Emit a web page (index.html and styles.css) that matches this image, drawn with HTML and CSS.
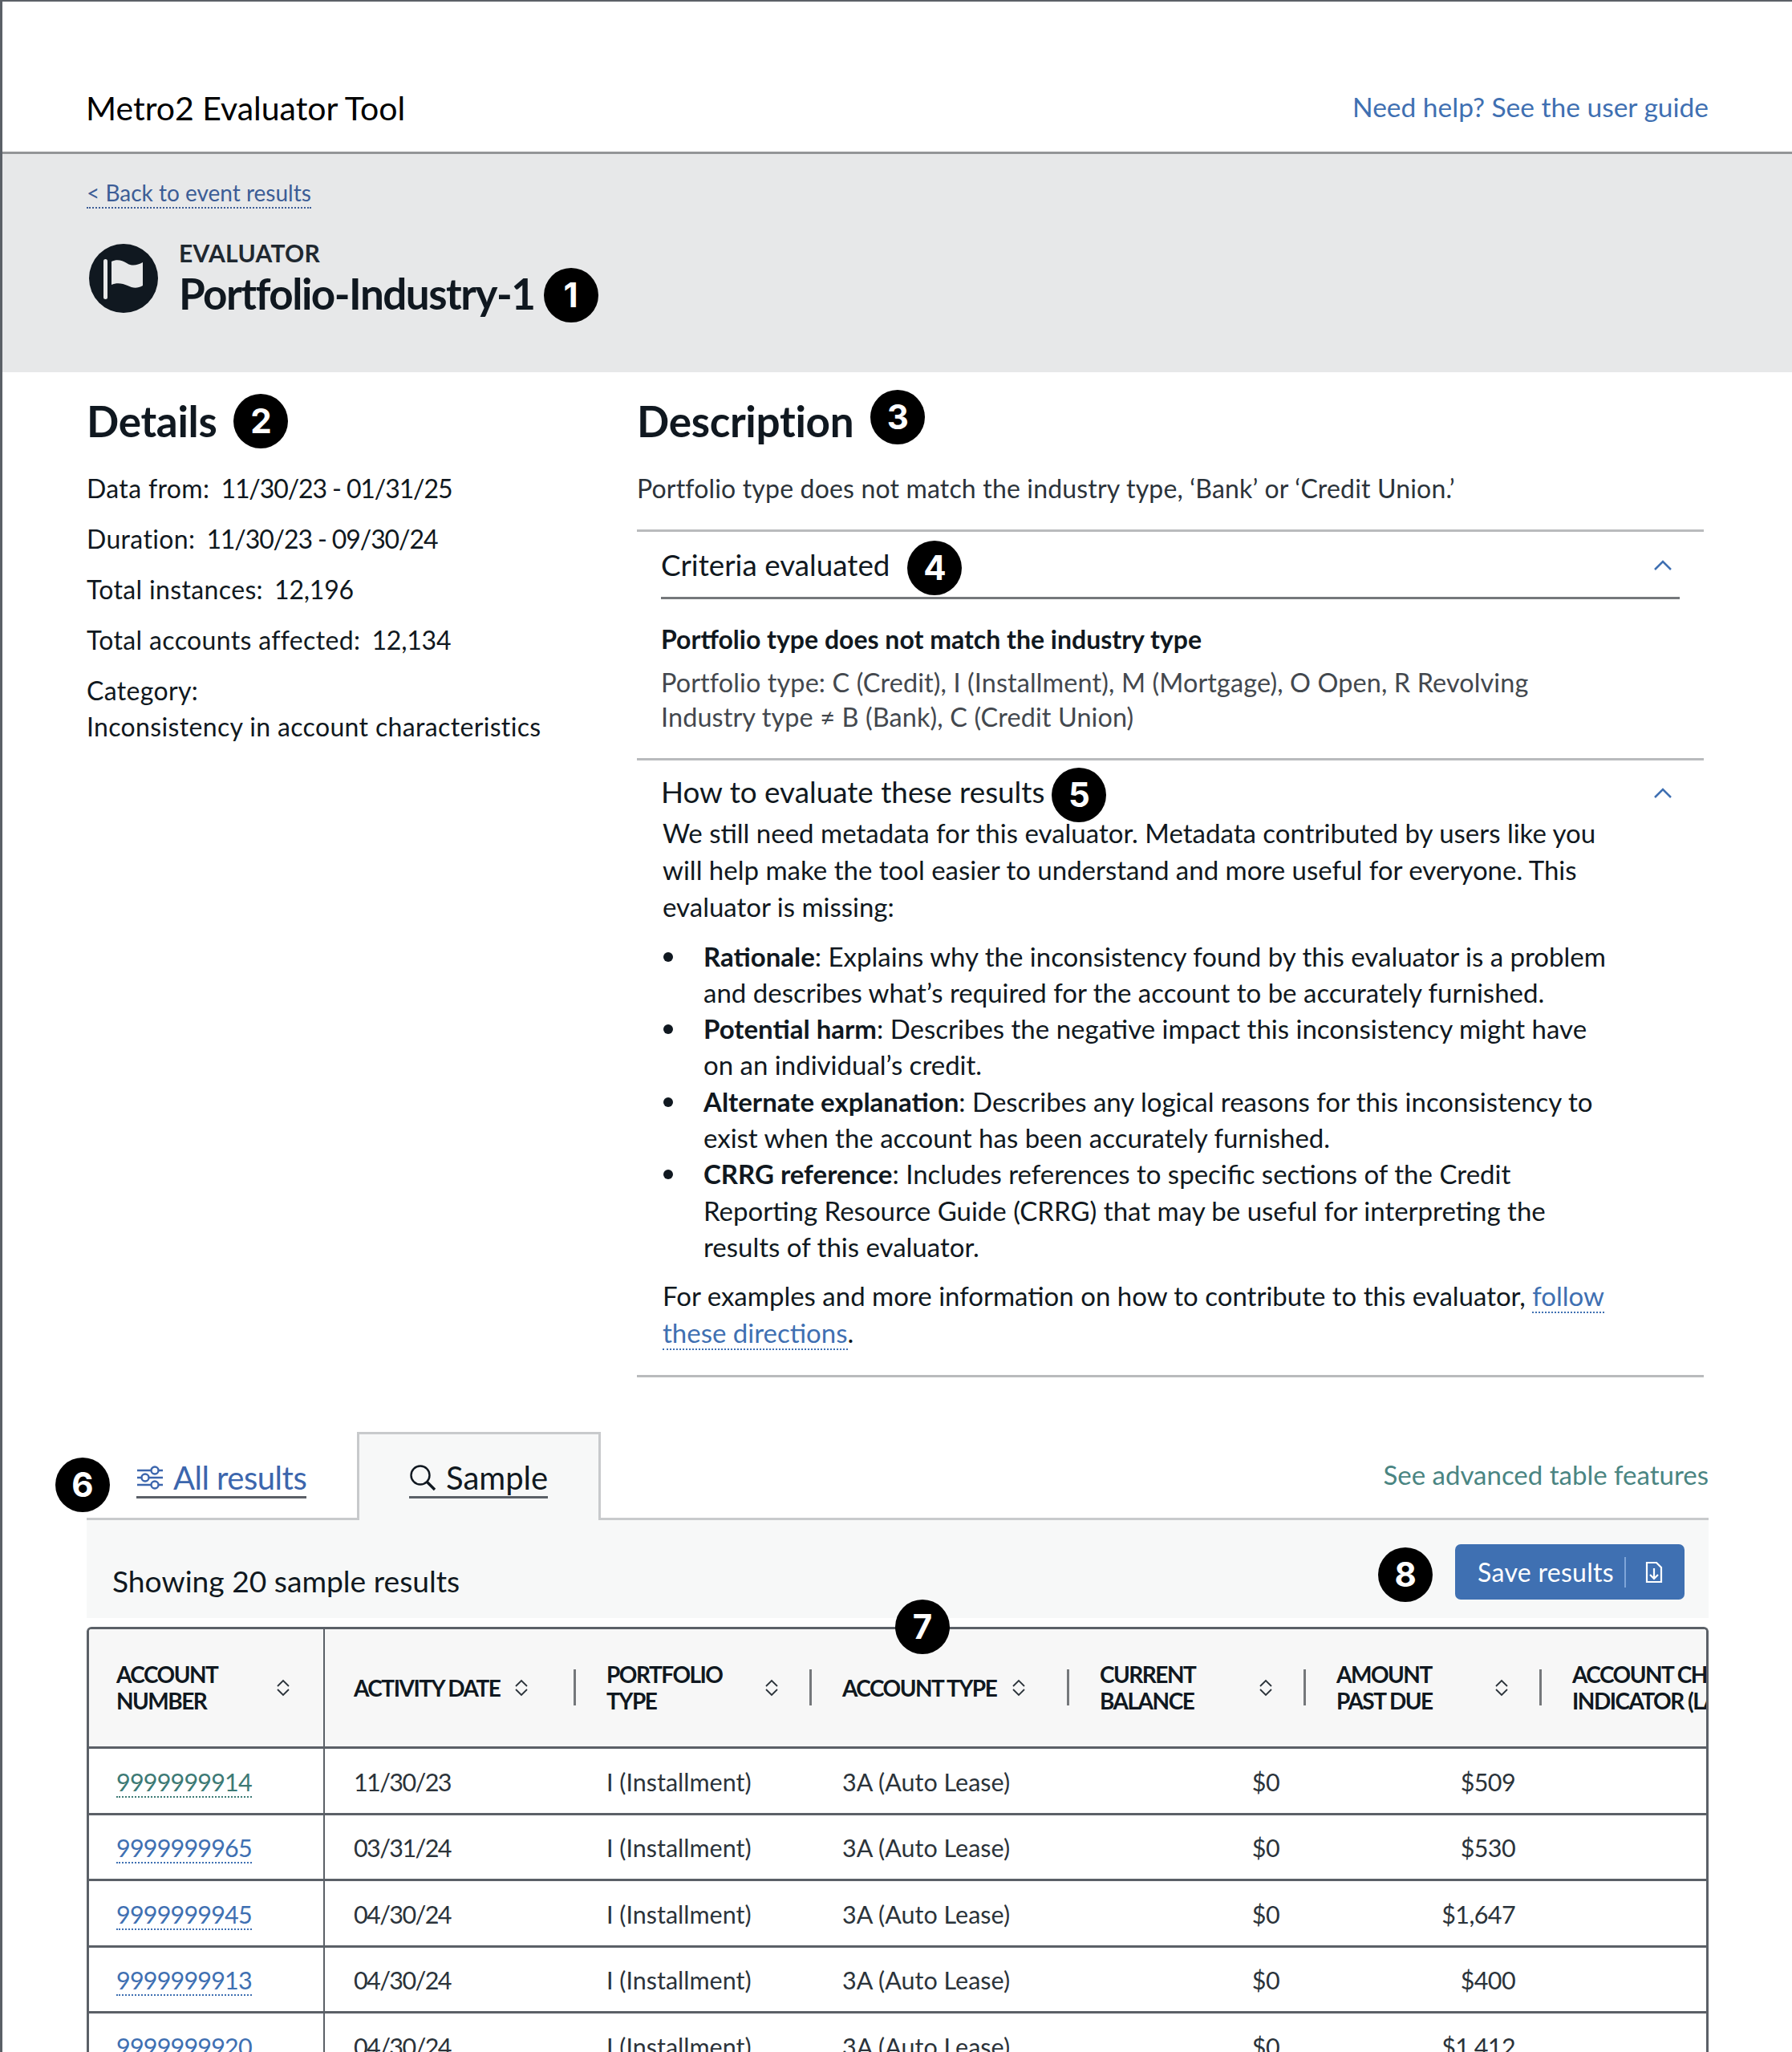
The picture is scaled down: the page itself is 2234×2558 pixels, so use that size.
FILE: index.html
```html
<!DOCTYPE html>
<html lang="en">
<head>
  <meta charset="UTF-8">
  <title>Metro2 Evaluator Tool</title>
  <link rel="stylesheet" href="styles.css">
</head>
<body>
  <div class="page">
    <header class="top-bar">
      <div class="app-title">Metro2 Evaluator Tool</div>
      <a class="help-link" href="#">Need help? See the user guide</a>
    </header>

    <section class="hero">
      <a class="back-link" href="#">&lt; Back to event results</a>
      <div class="hero-row">
        <svg class="flag-icon" viewBox="0 0 86 86">
          <circle cx="43" cy="43" r="43" fill="#101820"/>
          <rect x="18" y="19" width="5" height="50" rx="2.5" fill="#e7e8e9"/>
          <path d="M28 22C34 19 41 20 47 24S60 27 67 23V52C60 56 54 55 48 52S34 48 28 51Z" fill="#e7e8e9"/>
        </svg>
        <div>
          <div class="eyebrow">EVALUATOR</div>
          <div class="hero-title">Portfolio-Industry-1 <span class="badge badge-hero">1</span></div>
        </div>
      </div>
    </section>

    <main class="columns">
      <section class="details">
        <h2 class="section-head">Details <span class="badge">2</span></h2>
        <p class="detail-row">Data from:&nbsp; <span class="dates">11/30/23 - 01/31/25</span></p>
        <p class="detail-row">Duration:&nbsp; <span class="dates">11/30/23 - 09/30/24</span></p>
        <p class="detail-row">Total instances:&nbsp; <span class="count">12,196</span></p>
        <p class="detail-row">Total accounts affected:&nbsp; <span class="count">12,134</span></p>
        <p class="detail-row detail-category">Category:<br>Inconsistency in account characteristics</p>
      </section>

      <section class="description">
        <h2 class="section-head">Description <span class="badge badge-raised">3</span></h2>
        <p class="lead">Portfolio type does not match the industry type, ‘Bank’ or ‘Credit Union.’</p>

        <div class="accordion">
          <div class="accordion-head accordion-head-ruled">
            <span class="accordion-title">Criteria evaluated <span class="badge badge-low badge-wide">4</span></span>
            <svg class="chevron" viewBox="0 0 24 14"><path d="M2 12 12 2l10 10"/></svg>
          </div>
          <div class="criteria">
            <div class="criteria-name">Portfolio type does not match the industry type</div>
            <div class="criteria-text">Portfolio type: C (Credit), I (Installment), M (Mortgage), O Open, R Revolving<br>Industry type ≠ B (Bank), C (Credit Union)</div>
          </div>
        </div>

        <div class="accordion accordion-last">
          <div class="accordion-head accordion-head-tight">
            <span class="accordion-title">How to evaluate these results <span class="badge badge-low badge-five">5</span></span>
            <svg class="chevron" viewBox="0 0 24 14"><path d="M2 12 12 2l10 10"/></svg>
          </div>
          <div class="how-to">
            <p>We still need metadata for this evaluator. Metadata contributed by users like you will help make the tool easier to understand and more useful for everyone. This evaluator is missing:</p>
            <ul>
              <li><b>Rationale</b>: Explains why the inconsistency found by this evaluator is a problem and describes what’s required for the account to be accurately furnished.</li>
              <li><b>Potential harm</b>: Describes the negative impact this inconsistency might have on an individual’s credit.</li>
              <li><b>Alternate explanation</b>: Describes any logical reasons for this inconsistency to exist when the account has been accurately furnished.</li>
              <li><b>CRRG reference</b>: Includes references to specific sections of the Credit Reporting Resource Guide (CRRG) that may be useful for interpreting the results of this evaluator.</li>
            </ul>
            <p>For examples and more information on how to contribute to this evaluator, <a class="dotted" href="#">follow these directions</a>.</p>
          </div>
        </div>
      </section>
    </main>

    <section class="results">
      <div class="tabs">
        <span class="badge badge-tabs">6</span>
        <div class="tab-list">
          <div class="tab tab-plain">
            <a class="tab-label" href="#">
              <svg class="tab-icon" viewBox="0 0 34 28" fill="none" stroke="#3c66ad" stroke-width="2.4">
                <path d="M1 5h17M28 5h5M1 14h5M16 14h17M1 23h17M28 23h5"/>
                <circle cx="23" cy="5" r="4.5"/><circle cx="11" cy="14" r="4.5"/><circle cx="23" cy="23" r="4.5"/>
              </svg>All results</a>
          </div>
          <div class="tab tab-active">
            <a class="tab-label" href="#">
              <svg class="tab-icon" viewBox="0 0 34 34" fill="none" stroke="#101820" stroke-width="2.4">
                <circle cx="14" cy="14" r="11.5"/><path d="M22.5 22.5 32 32" stroke-width="3.4"/>
              </svg>Sample</a>
          </div>
        </div>
        <a class="advanced-link" href="#">See advanced table features</a>
      </div>

      <div class="panel">
        <div class="showing">Showing 20 sample results</div>
        <div class="panel-actions">
          <span class="badge">8</span>
          <button class="save-btn">Save results<span class="save-icon">
            <svg viewBox="0 0 22 28" width="22" height="28" fill="none" stroke="#fff" stroke-width="2.2">
              <path d="M2 2h12l6 6v18H2Z"/><path d="M11 9v13M6 17l5 5 5-5"/>
            </svg></span></button>
        </div>
      </div>

      <div class="table-area">
        <span class="badge badge-table">7</span>
        <div class="table-wrap">
          <table class="data-table">
            <thead>
              <tr>
                <th class="col-account"><div class="th-inner"><span>ACCOUNT<br>NUMBER</span><svg class="sort" viewBox="0 0 16 22"><path d="M1 9 8 2l7 7M1 13l7 7 7-7"/></svg></div></th>
                <th class="col-date sep"><div class="th-inner"><span>ACTIVITY DATE</span><svg class="sort" viewBox="0 0 16 22"><path d="M1 9 8 2l7 7M1 13l7 7 7-7"/></svg></div></th>
                <th class="col-portfolio sep"><div class="th-inner"><span>PORTFOLIO<br>TYPE</span><svg class="sort" viewBox="0 0 16 22"><path d="M1 9 8 2l7 7M1 13l7 7 7-7"/></svg></div></th>
                <th class="col-type sep"><div class="th-inner"><span>ACCOUNT TYPE</span><svg class="sort" viewBox="0 0 16 22"><path d="M1 9 8 2l7 7M1 13l7 7 7-7"/></svg></div></th>
                <th class="col-balance sep"><div class="th-inner"><span>CURRENT<br>BALANCE</span><svg class="sort" viewBox="0 0 16 22"><path d="M1 9 8 2l7 7M1 13l7 7 7-7"/></svg></div></th>
                <th class="col-due sep"><div class="th-inner"><span>AMOUNT<br>PAST DUE</span><svg class="sort" viewBox="0 0 16 22"><path d="M1 9 8 2l7 7M1 13l7 7 7-7"/></svg></div></th>
                <th class="col-indicator"><div class="th-inner"><span>ACCOUNT CHANGE<br>INDICATOR (LAST)</span></div></th>
              </tr>
            </thead>
            <tbody>
              <tr><td><a class="acct acct-visited" href="#">9999999914</a></td><td class="date">11/30/23</td><td>I (Installment)</td><td>3A (Auto Lease)</td><td class="num">$0</td><td class="num">$509</td><td></td></tr>
              <tr><td><a class="acct" href="#">9999999965</a></td><td class="date">03/31/24</td><td>I (Installment)</td><td>3A (Auto Lease)</td><td class="num">$0</td><td class="num">$530</td><td></td></tr>
              <tr><td><a class="acct" href="#">9999999945</a></td><td class="date">04/30/24</td><td>I (Installment)</td><td>3A (Auto Lease)</td><td class="num">$0</td><td class="num">$1,647</td><td></td></tr>
              <tr><td><a class="acct" href="#">9999999913</a></td><td class="date">04/30/24</td><td>I (Installment)</td><td>3A (Auto Lease)</td><td class="num">$0</td><td class="num">$400</td><td></td></tr>
              <tr><td><a class="acct" href="#">9999999920</a></td><td class="date">04/30/24</td><td>I (Installment)</td><td>3A (Auto Lease)</td><td class="num">$0</td><td class="num">$1,412</td><td></td></tr>
            </tbody>
          </table>
        </div>
      </div>
    </section>
  </div>
</body>
</html>
```

FILE: styles.css
```css
html, body {
  margin: 0;
  padding: 0;
  background-color: #fff;
}
body {
  font-family: "Lato", "Noto Sans", sans-serif;
  color: #101820;
  font-size: 32px;
}
a {
  color: #3f70b2;
  text-decoration: none;
}
p {
  margin: 0;
}
.page {
  height: 2556px;
  overflow: hidden;
  border-top: 2px solid #5b6067;
  border-left: 3px solid #5b6067;
}

/* top bar */
.top-bar {
  height: 190px;
  box-sizing: border-box;
  display: flex;
  justify-content: space-between;
  align-items: flex-end;
  padding: 0 104px 29px 104px;
  border-bottom: 3px solid #939597;
}
.app-title {
  font-size: 41px;
  line-height: 50px;
  color: #000;
}
.help-link {
  font-size: 33.5px;
  line-height: 50px;
  margin-bottom: 2px;
}

/* grey band */
.hero {
  height: 272px;
  box-sizing: border-box;
  background-color: #e7e8e9;
  padding: 27px 0 0 105px;
}
.back-link {
  display: inline-block;
  font-size: 28px;
  line-height: 36px;
  color: #3c5d96;
  border-bottom: 2px dotted #3c5d96;
}
.hero-row {
  display: flex;
  align-items: flex-start;
  gap: 26px;
  margin-top: 37px;
}
.flag-icon {
  width: 86px;
  height: 86px;
  margin: 7px 0 0 3px;
}
.eyebrow {
  font-size: 30px;
  line-height: 36px;
  font-weight: 700;
  letter-spacing: 0.3px;
  color: #1f2830;
}
.hero-title {
  display: flex;
  align-items: center;
  gap: 11px;
  font-size: 53px;
  line-height: 68px;
  font-weight: 700;
  letter-spacing: -1.5px;
  margin-top: -3px;
}

/* callout number */
.badge {
  display: inline-flex;
  flex: none;
  align-items: center;
  justify-content: center;
  width: 68px;
  height: 68px;
  border-radius: 50%;
  background-color: #000;
  color: #fff;
  font-size: 42px;
  line-height: 1;
  font-weight: 700;
  letter-spacing: 0;
  font-family: "Inter", "Lato", sans-serif;
}
.badge-hero {
  margin-top: 4px;
}
.badge-raised {
  margin-top: -10px;
}
.badge-low {
  margin-top: 8px;
}
.badge-wide {
  margin-left: 10px;
}
.badge-five {
  margin-left: -3px;
}

/* details + description */
.columns {
  display: grid;
  grid-template-columns: 686px 1330px;
  padding-left: 105px;
}
.section-head {
  display: flex;
  align-items: center;
  gap: 21px;
  margin: 27px 0 27px;
  font-size: 53px;
  line-height: 68px;
  font-weight: 700;
  letter-spacing: -0.3px;
}
.detail-row {
  line-height: 46px;
  margin-bottom: 17px;
  letter-spacing: 0.35px;
}
.detail-category {
  line-height: 45px;
}
.dates {
  margin-left: -3px;
  letter-spacing: -1.1px;
}
.count {
  margin-left: -3px;
  letter-spacing: -0.2px;
}
.lead {
  line-height: 46px;
  margin-bottom: 28px;
  letter-spacing: 0.17px;
  color: #2b333a;
}
.accordion {
  border-top: 3px solid #b9bbbd;
  padding: 0 30px 30px;
}
.accordion-last {
  border-bottom: 3px solid #b9bbbd;
}
.accordion-head {
  display: flex;
  justify-content: space-between;
  align-items: center;
}
.accordion-head-ruled {
  height: 81px;
  border-bottom: 3px solid #75787b;
}
.accordion-head-tight {
  height: 66.5px;
  padding-top: 11px;
  box-sizing: border-box;
}
.accordion-title {
  display: flex;
  align-items: center;
  gap: 12px;
  font-size: 36.8px;
  height: 50px;
}
.chevron {
  width: 24px;
  height: 14px;
  margin: 2px 9px 0 0;
  fill: none;
  stroke: #3f70b2;
  stroke-width: 2.5;
}
.accordion-head-tight .chevron {
  margin-top: 5px;
}
.criteria {
  margin-top: 27px;
}
.criteria-name {
  line-height: 46px;
  font-weight: 700;
  margin-bottom: 9px;
}
.criteria-text {
  line-height: 43px;
  font-size: 32.4px;
  letter-spacing: 0.12px;
  color: #43484e;
}
.how-to {
  padding-left: 2px;
  width: 1180px;
  font-size: 33px;
  line-height: 46px;
}
.how-to ul {
  margin: 17px 0 15px;
  padding: 0 0 0 51px;
  line-height: 45.3px;
  list-style: none;
}
.how-to li {
  position: relative;
}
.how-to li::before {
  content: "";
  position: absolute;
  left: -50px;
  top: 17px;
  width: 12px;
  height: 12px;
  border-radius: 50%;
  background-color: #101820;
}
.dotted {
  border-bottom: 2px dotted #3f70b2;
}

/* results */
.results {
  margin-top: 68px;
  padding: 0 104px 0 105px;
}
.tabs {
  position: relative;
  display: flex;
  justify-content: space-between;
  border-bottom: 3px solid #c8cacc;
}
.badge-tabs {
  position: absolute;
  left: -39px;
  top: 32px;
}
.tab-list {
  display: flex;
  margin-left: 62px;
  margin-bottom: -3px;
}
.tab {
  height: 110px;
  box-sizing: border-box;
  padding-top: 35px;
  font-size: 40px;
}
.tab-label {
  display: inline-flex;
  align-items: center;
  gap: 12px;
  line-height: 42px;
  padding-bottom: 2px;
  border-bottom: 3px solid #5b6067;
}
.tab-plain {
  width: 275px;
  letter-spacing: -0.5px;
}
.tab-plain .tab-label {
  color: #3c66ad;
}
.tab-active {
  width: 304px;
  padding-top: 32px;
  padding-left: 62px;
  background-color: #f7f8f8;
  border: 3px solid #c8cacc;
  border-bottom: none;
}
.tab-active .tab-label {
  color: #101820;
}
.tab-icon {
  width: 34px;
  height: 34px;
}
.advanced-link {
  color: #4a8582;
  font-size: 33px;
  line-height: 50px;
  margin-top: 28px;
}
.panel {
  height: 122px;
  box-sizing: border-box;
  background-color: #f7f8f8;
  display: flex;
  justify-content: space-between;
  padding: 30px 30px 0 32px;
}
.showing {
  font-size: 37.2px;
  line-height: 50px;
  margin-top: 21px;
}
.panel-actions {
  display: flex;
  gap: 28px;
  align-items: flex-start;
}
.panel-actions .badge {
  margin-top: 4px;
}
.save-btn {
  display: flex;
  align-items: center;
  height: 69px;
  padding: 0 27px 0 28px;
  background-color: #3f70b2;
  border: none;
  border-radius: 7px;
  color: #fff;
  font-family: inherit;
  font-size: 32px;
  letter-spacing: 0.3px;
}
.save-icon {
  display: flex;
  margin-left: 13px;
  padding: 5px 0 5px 24px;
  border-left: 2px solid #7fa5d8;
}

/* table */
.table-area {
  position: relative;
  margin-top: 11px;
}
.badge-table {
  position: absolute;
  left: 1008px;
  top: -34px;
  z-index: 1;
}
.table-wrap {
  overflow: hidden;
  border: 3px solid #5b6067;
  border-bottom: none;
  border-radius: 6px 6px 0 0;
}
.data-table {
  table-layout: fixed;
  width: 2313px;
  border-collapse: separate;
  border-spacing: 0;
}
.data-table th {
  height: 149px;
  box-sizing: border-box;
  padding: 0 0 0 36px;
  background-color: #f7f7f7;
  border-bottom: 3px solid #5b6067;
  text-align: left;
  font-size: 28px;
  line-height: 33px;
  font-weight: 700;
  letter-spacing: -1.5px;
}
.sep {
  position: relative;
}
.sep::after {
  content: "";
  position: absolute;
  right: 2px;
  top: 50px;
  width: 3px;
  height: 45px;
  background-color: #75787b;
}
.th-inner {
  display: flex;
  justify-content: space-between;
  align-items: center;
  padding-right: 44px;
}
.col-account {
  width: 294px;
  border-right: 2px solid #5b6067;
}
.data-table th.col-account,
.data-table td:first-child {
  padding-left: 34px;
}
.col-account .th-inner {
  padding-right: 42px;
}
.col-date { width: 315px; }
.col-date .th-inner {
  padding-right: 62px;
}
.col-portfolio { width: 294px; }
.col-type { width: 321px; }
.col-type .th-inner {
  padding-right: 57px;
}
.col-balance { width: 295px; }
.col-due { width: 294px; }
.col-indicator { width: 500px; }
.sort {
  width: 16px;
  height: 22px;
  fill: none;
  stroke: #2b333a;
  stroke-width: 1.8;
}
.data-table td {
  height: 82.5px;
  box-sizing: border-box;
  padding: 2px 0 0 36px;
  border-bottom: 3px solid #5b6067;
  font-size: 30.5px;
  color: #2b333a;
}
.data-table td:first-child {
  border-right: 2px solid #5b6067;
}
.data-table td.num {
  text-align: right;
  padding-right: 35px;
  letter-spacing: -0.6px;
}
.data-table td.date {
  letter-spacing: -1.6px;
}
.acct {
  color: #3f70b2;
  border-bottom: 2px dotted #3f70b2;
  letter-spacing: -0.8px;
}
.acct-visited {
  color: #3d7a75;
  border-bottom-color: #3d7a75;
}
```
